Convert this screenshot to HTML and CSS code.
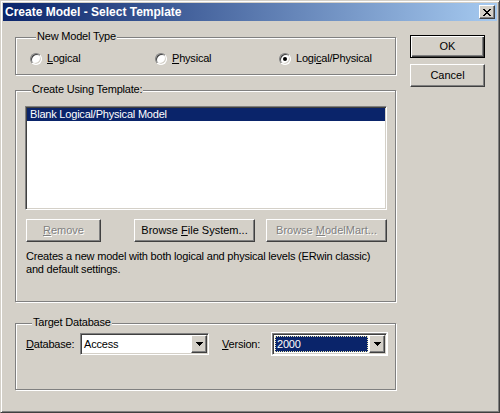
FILE: index.html
```
<!DOCTYPE html>
<html>
	<head>
		<meta charset="UTF-8">
		<title>Create Model - Select Template</title>
		<link rel="stylesheet" href="styles.css">
	</head>
	<body>
		<div class="window">
			<div class="titlebar">
				<span class="title">Create Model - Select Template</span>
				<button class="close" type="button">
					<svg width="8" height="7" viewBox="0 0 8 7"><path d="M0 0h2v1H0z M6 0h2v1H6z M1 1h2v1H1z M5 1h2v1H5z M2 2h4v1H2z M3 3h2v1H3z M2 4h4v1H2z M1 5h2v1H1z M5 5h2v1H5z M0 6h2v1H0z M6 6h2v1H6z" fill="#000"/></svg>
				</button>
			</div>
			<div class="content">
				<div class="main">
					<div class="group group-type">
						<div class="group-title">New Model Type</div>
						<div class="radios">
							<label class="radio radio-1"><span class="radio-box"></span><span><u>L</u>ogical</span></label>
							<label class="radio radio-2"><span class="radio-box"></span><span><u>P</u>hysical</span></label>
							<label class="radio"><span class="radio-box checked"></span><span>Logi<u>c</u>al/Physical</span></label>
						</div>
					</div>
					<div class="group group-template">
						<div class="group-title">Create Using Template:</div>
						<div class="list">
							<div class="list-item selected">Blank Logical/Physical Model</div>
						</div>
						<div class="actions">
							<button class="btn btn-remove" type="button" disabled><u>R</u>emove</button>
							<button class="btn btn-browse-fs" type="button">Browse <u>F</u>ile System...</button>
							<button class="btn btn-browse-mm" type="button" disabled>Browse <u>M</u>odelMart...</button>
						</div>
						<p class="desc">Creates a new model with both logical and physical levels (ERwin classic)<br>and default settings.</p>
					</div>
					<div class="group group-target">
						<div class="group-title">Target Database</div>
						<div class="db-row">
							<span class="db-label"><u>D</u>atabase:</span>
							<div class="combo combo-db">
								<span class="combo-value">Access</span>
								<span class="drop"><svg width="7" height="4" viewBox="0 0 7 4"><path d="M0 0h7v1H0z M1 1h5v1H1z M2 2h3v1H2z M3 3h1v1H3z" fill="#000"/></svg></span>
							</div>
							<span class="db-label version-label"><u>V</u>ersion:</span>
							<div class="combo combo-version">
								<span class="combo-value"><span class="combo-sel">2000</span></span>
								<span class="drop"><svg width="7" height="4" viewBox="0 0 7 4"><path d="M0 0h7v1H0z M1 1h5v1H1z M2 2h3v1H2z M3 3h1v1H3z" fill="#000"/></svg></span>
							</div>
						</div>
					</div>
				</div>
				<div class="side">
					<button class="btn btn-default" type="button">OK</button>
					<button class="btn" type="button">Cancel</button>
				</div>
			</div>
		</div>
	</body>
</html>
```
FILE: styles.css
```
*, *:before, *:after {
	box-sizing: border-box;
}
html, body {
	margin: 0;
}
body {
	background: #D4D0C8;
	color: #000;
	font-family: "Liberation Sans", Arial, sans-serif;
	font-size: 11px;
	line-height: 13px;
	letter-spacing: -0.2px;
}
.window {
	width: 500px;
	height: 413px;
	border: 1px solid;
	border-color: #D4D0C8 #404040 #404040 #D4D0C8;
	box-shadow: inset 1px 1px #fff, inset -1px -1px #808080;
	padding: 2px;
}
.titlebar {
	display: flex;
	align-items: center;
	height: 18px;
	background: linear-gradient(to right, #0A246A, #A6CAF0);
	color: #fff;
}
.title {
	flex: 1;
	padding-left: 2px;
	font-size: 12px;
	font-weight: bold;
	letter-spacing: 0;
}
.close, .btn, .drop {
	background: #D4D0C8;
	border: 1px solid;
	border-color: #fff #404040 #404040 #fff;
	box-shadow: inset -1px -1px #808080, inset 1px 1px #D4D0C8;
}
.close {
	display: flex;
	align-items: center;
	justify-content: center;
	width: 16px;
	height: 14px;
	margin-right: 2px;
	padding: 0;
}
.content {
	display: flex;
	align-items: flex-start;
	padding: 14px 0 0 12px;
}
.main {
	width: 381px;
	margin-top: 2px;
}
.side {
	display: flex;
	flex-direction: column;
	gap: 6px;
	margin-left: 14px;
}
.side .btn {
	width: 75px;
}
.group {
	border: 1px solid #808080;
	box-shadow: 1px 1px #fff, inset 1px 1px #fff;
}
.group-title {
	width: fit-content;
	margin: -8px 0 0 6px;
	padding: 0 1px;
	background: #D4D0C8;
}
.group-type {
	padding: 0 0 9px 14px;
}
.radios {
	display: flex;
	margin-top: 9px;
}
.radio {
	display: flex;
	align-items: flex-start;
}
.radio-1 {
	width: 125px;
}
.radio-2 {
	width: 124px;
}
.radio-box {
	display: flex;
	align-items: center;
	justify-content: center;
	width: 12px;
	height: 12px;
	margin: 1px 5px 0 0;
	border-radius: 50%;
	border: 1px solid;
	border-color: #808080 #fff #fff #808080;
	box-shadow: inset 1px 1px #404040, inset -1px -1px #D4D0C8;
	background: #fff;
}
.radio-box.checked:after {
	content: "";
	width: 4px;
	height: 4px;
	border-radius: 50%;
	background: #000;
}
.group-template {
	margin-top: 15px;
	padding: 0 8px 25px 9px;
}
.list {
	height: 104px;
	margin-top: 10px;
	padding: 1px;
	border: 1px solid;
	border-color: #808080 #fff #fff #808080;
	box-shadow: inset 1px 1px #404040, inset -1px -1px #D4D0C8;
	background: #fff;
}
.list-item {
	height: 13px;
	padding-left: 3px;
}
.list-item.selected {
	background: #0A246A;
	color: #fff;
}
.actions {
	display: flex;
	margin: 9px 0 0 1px;
}
.btn {
	height: 23px;
	padding: 0;
	font: inherit;
	color: #000;
	text-align: center;
}
.btn:disabled {
	color: #808080;
	text-shadow: 1px 1px #fff;
}
.btn-default {
	border-color: #000;
	box-shadow: inset 1px 1px #fff, inset -1px -1px #404040, inset -2px -2px #808080;
}
.btn-remove {
	width: 75px;
}
.btn-browse-fs {
	width: 121px;
	margin-left: 33px;
}
.btn-browse-mm {
	width: 121px;
	margin-left: 11px;
}
.desc {
	margin: 8px 0 0 1px;
}
.group-target {
	margin-top: 21px;
	padding: 0 0 34px 10px;
}
.db-row {
	display: flex;
	align-items: center;
	margin-top: 4px;
}
.db-label {
	width: 54px;
}
.version-label {
	width: 50px;
	margin-left: 13px;
}
.combo {
	display: flex;
	height: 22px;
	padding: 1px;
	border: 1px solid;
	border-color: #808080 #fff #fff #808080;
	box-shadow: inset 1px 1px #404040, inset -1px -1px #D4D0C8;
	background: #fff;
}
.combo-db {
	width: 129px;
}
.combo-version {
	width: 115px;
	outline: 1px solid #fff;
}
.combo-value {
	flex: 1;
	padding-left: 2px;
	line-height: 18px;
}
.combo-version .combo-value {
	display: flex;
	padding: 1px;
}
.combo-sel {
	flex: 1;
	padding-left: 1px;
	line-height: 14px;
	border: 1px dotted #E8E4B0;
	background: #0A246A;
	color: #fff;
}
.drop {
	display: flex;
	align-items: center;
	justify-content: center;
	width: 16px;
}
```
